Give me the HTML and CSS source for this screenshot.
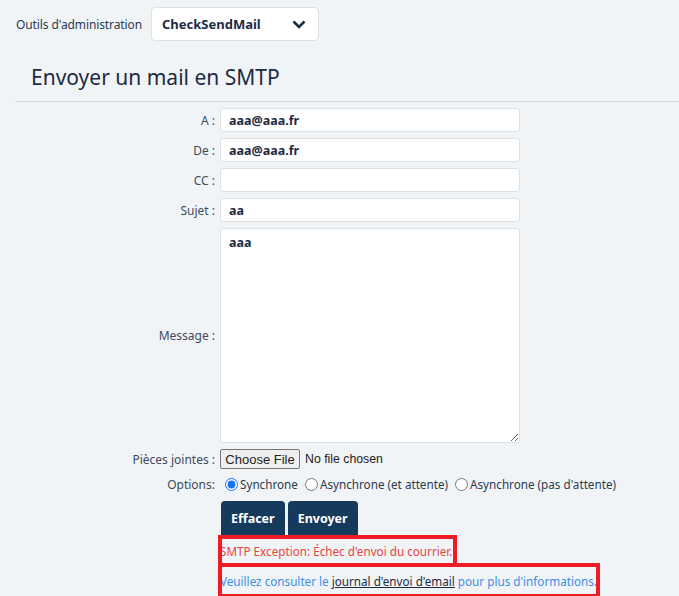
FILE: index.html
```html
<!DOCTYPE html>
<html lang="fr">
<head>
  <meta charset="UTF-8">
  <title>Envoyer un mail en SMTP</title>
  <link rel="stylesheet" href="styles.css">
</head>
<body>
  <div class="topbar">
    <span class="topbar-label">Outils d'administration</span>
    <div class="tool-select">
      <span>CheckSendMail</span>
      <svg width="14" height="10" viewBox="0 0 14 10"><path d="M1.5 2.5 L7 8 L12.5 2.5" fill="none" stroke="#1d2b44" stroke-width="2.6"/></svg>
    </div>
  </div>

  <div class="page-title">
    <h1>Envoyer un mail en SMTP</h1>
  </div>

  <form class="mail-form">
    <label class="field-label">A :</label>
    <input class="field" type="text" value="aaa@aaa.fr">

    <label class="field-label">De :</label>
    <input class="field" type="text" value="aaa@aaa.fr">

    <label class="field-label">CC :</label>
    <input class="field" type="text" value="">

    <label class="field-label">Sujet :</label>
    <input class="field" type="text" value="aa">

    <label class="field-label">Message :</label>
    <textarea class="field message">aaa</textarea>

    <label class="field-label">Pièces jointes :</label>
    <div class="file-row">
      <span class="file-button">Choose File</span>
      <span>No file chosen</span>
    </div>

    <label class="field-label">Options:</label>
    <div class="options">
      <label><input type="radio" name="mode" checked> Synchrone</label>
      <label><input type="radio" name="mode"> Asynchrone (et attente)</label>
      <label><input type="radio" name="mode"> Asynchrone (pas d'attente)</label>
    </div>

    <span></span>
    <div class="actions">
      <button type="button" class="btn">Effacer</button>
      <button type="button" class="btn">Envoyer</button>
    </div>

    <span></span>
    <div class="messages">
      <div class="msg msg-error">SMTP Exception: Échec d'envoi du courrier.</div>
      <div class="msg msg-info">Veuillez consulter le <a href="#">journal d'envoi d'email</a> pour plus d'informations.</div>
    </div>
  </form>
</body>
</html>
```

FILE: styles.css
```css
body {
  margin: 0;
  background-color: #f1f4f6;
  font-family: "Noto Sans", "Open Sans", sans-serif;
  color: #2b3a4e;
  overflow: hidden;
}
.topbar {
  display: flex;
  align-items: center;
  padding: 7px 0 0 16px;
  height: 34px;
}
.topbar-label {
  font-size: 12px;
  width: 135px;
  letter-spacing: -0.1px;
}
.tool-select {
  display: flex;
  align-items: center;
  justify-content: space-between;
  box-sizing: border-box;
  width: 168px;
  height: 34px;
  padding: 0 12px 0 10px;
  background-color: white;
  border: 1px solid #dde1e5;
  border-radius: 4px;
  font-size: 13px;
  font-weight: bold;
  color: #1d2b44;
}
.page-title {
  margin: 0 0 0 15px;
  border-bottom: 1px solid #d4d8dc;
  height: 60px;
}
.page-title h1 {
  margin: 0;
  padding: 23px 0 0 16px;
  font-size: 21px;
  font-weight: normal;
  color: #1d2b44;
  line-height: 26px;
}
.mail-form {
  display: grid;
  grid-template-columns: 215px 300px;
  column-gap: 5px;
  row-gap: 6px;
  margin-top: 6px;
  font-size: 12px;
}
.field-label {
  display: flex;
  align-items: center;
  justify-content: flex-end;
  color: #3d4b5c;
}
.field {
  box-sizing: border-box;
  width: 300px;
  height: 24px;
  padding: 0 8px;
  background-color: white;
  border: 1px solid #dde1e5;
  border-radius: 3px;
  font-family: inherit;
  font-size: 12.5px;
  font-weight: bold;
  color: #1d2b44;
  outline: none;
}
.message {
  height: 215px;
  padding: 5px 8px;
  resize: vertical;
}
.file-row {
  display: flex;
  align-items: center;
  gap: 5px;
  height: 20px;
  font-size: 12.3px;
  color: #222;
  font-family: "Liberation Sans", Arial, sans-serif;
}
.file-button {
  box-sizing: border-box;
  width: 80px;
  height: 20px;
  display: flex;
  align-items: center;
  justify-content: center;
  background-color: #efefef;
  border: 1px solid #767676;
  border-radius: 2px;
  font-size: 13px;
}
.options {
  display: flex;
  align-items: center;
  white-space: nowrap;
  height: 18px;
  font-size: 11.7px;
  color: #2b3a4e;
}
.options label {
  display: flex;
  align-items: center;
  margin-right: 2px;
}
.options input {
  margin: 0 2px 0 5px;
  width: 13px;
  height: 13px;
  accent-color: #1a73e8;
}
.actions {
  display: flex;
  gap: 3px;
  margin-top: 2px;
  height: 34px;
  padding-left: 1px;
}
.btn {
  height: 35px;
  padding: 0 10px;
  background-color: #163a5c;
  color: white;
  border: none;
  border-radius: 4px 4px 0 0;
  font-family: inherit;
  font-size: 12.5px;
  font-weight: bold;
}
.messages {
  position: relative;
  margin-left: -2px;
  margin-top: -6px;
  white-space: nowrap;
  font-size: 11.7px;
}
.msg {
  position: relative;
  box-sizing: border-box;
  padding-left: 2px;
  display: flex;
  align-items: center;
}
.msg::after {
  content: "";
  position: absolute;
  top: 0;
  left: 0;
  right: 0;
  bottom: 0;
  border: 4px solid #ee1c25;
}
.msg-error {
  width: 239px;
  height: 32px;
  color: #e9433d;
}
.msg-info {
  width: 382px;
  height: 35px;
  margin-top: -4px;
  color: #3c8fe2;
}
.msg-info a {
  color: #1d2b44;
  margin: 0 3px;
}
```
